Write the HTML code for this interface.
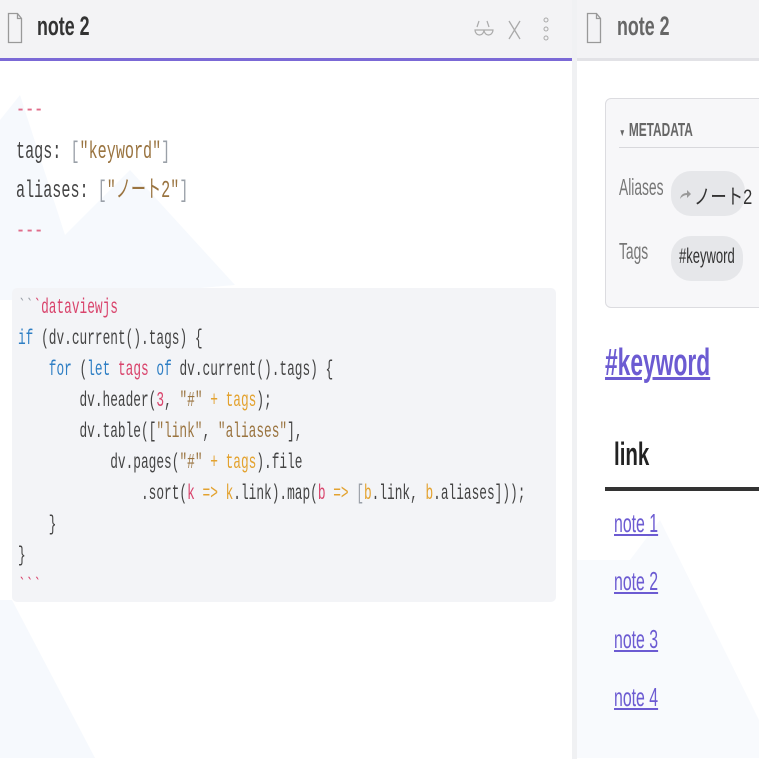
<!DOCTYPE html>
<html><head><meta charset="utf-8"><style>
*{margin:0;padding:0;box-sizing:border-box}
body{width:759px;height:759px;overflow:hidden;background:#fff;position:relative;font-family:"Liberation Sans","Noto Sans CJK JP",sans-serif}
.a{position:absolute;white-space:pre;transform-origin:0 50%}
.m{font-family:"Liberation Mono","Noto Sans CJK JP",monospace}
.pk{color:#d9446c}.bl{color:#2d7ec4}.br{color:#9a7440}.or{color:#e3a22f}.gy{color:#9aa0a8}
</style></head><body>
<svg style="position:absolute;left:0;top:0" width="759" height="759">
<polygon points="0,120 20,95 65,235 130,170 235,285 60,300 0,300" fill="#f6f9fd"/>
<polygon points="0,600 12,600 95,758 0,758" fill="#f6f9fd"/>
<polygon points="577,560 630,560 660,520 759,720 759,758 577,758" fill="#f8fafd"/>
</svg>
<div style="position:absolute;left:0;top:0;width:572px;height:59px;background:#f3f3f5"></div>
<div style="position:absolute;left:0;top:58px;width:572px;height:3px;background:#7b69d6"></div>
<svg style="position:absolute;left:7px;top:12px" width="16" height="32"><path d="M1.5 1.5h9l4 5v24h-13z M10.5 1.5v5h4" fill="none" stroke="#999" stroke-width="1.3"/></svg>
<div class="a" style="left:37px;top:11px;font-size:27px;font-weight:bold;color:#333;transform:scaleX(.66)">note 2</div>
<svg style="position:absolute;left:474px;top:17px" width="80" height="26">
<path d="M3 10l2-6 M15 10l-2-6" stroke="#aaa" fill="none" stroke-width="1.2"/>
<path d="M1 13a4.5 5 0 0 0 9 0zM10 13a4.5 5 0 0 0 9 0zM1 13h18" stroke="#aaa" fill="none" stroke-width="1.2"/>
<path d="M35 4l11 18M46 4l-11 18" stroke="#aaa" stroke-width="1.3"/>
<circle cx="72" cy="3" r="2" fill="none" stroke="#aaa"/><circle cx="72" cy="12" r="2" fill="none" stroke="#aaa"/><circle cx="72" cy="21" r="2" fill="none" stroke="#aaa"/>
</svg>
<div style="position:absolute;left:572px;top:0;width:5px;height:759px;background:#f0f1f3"></div>
<div style="position:absolute;left:577px;top:0;width:182px;height:59px;background:#f3f3f5"></div>
<div style="position:absolute;left:577px;top:58px;width:182px;height:3px;background:#e2e2e6"></div>
<svg style="position:absolute;left:586px;top:12px" width="16" height="32"><path d="M1.5 1.5h9l4 5v24h-13z M10.5 1.5v5h4" fill="none" stroke="#999" stroke-width="1.3"/></svg>
<div class="a" style="left:617px;top:11px;font-size:27px;font-weight:bold;color:#666;transform:scaleX(.66)">note 2</div>
<div class="a m" style="left:16px;top:96px;line-height:30px;font-size:24px;transform:scaleX(.63);color:#e06c8a">---</div>
<div class="a m" style="left:16px;top:138px;line-height:30px;font-size:24px;transform:scaleX(.63);color:#444">tags: <span class="gy">[</span><span class="br">"keyword"</span><span class="gy">]</span></div>
<div class="a m" style="left:16px;top:177px;line-height:30px;font-size:24px;transform:scaleX(.63);color:#444">aliases: <span class="gy">[</span><span class="br">"ノート2"</span><span class="gy">]</span></div>
<div class="a m" style="left:16px;top:217px;line-height:30px;font-size:24px;transform:scaleX(.63);color:#e06c8a">---</div>
<div style="position:absolute;left:12px;top:288px;width:544px;height:314px;background:#f3f4f7;border-radius:5px"></div>
<div class="a m" style="left:18px;top:293px;font-size:21px;line-height:31px;transform:scaleX(.61);transform-origin:0 0;color:#444"><span class="pk"><span class="gy">&#96;&#96;</span>&#96;dataviewjs</span>
<span class="bl">if</span> (dv.current().tags) {
    <span class="bl">for</span> (<span class="bl">let</span> <span class="pk">tags</span> <span class="bl">of</span> dv.current().tags) {
        dv.header(<span class="pk">3</span>, <span class="br">"#"</span> <span class="or">+</span> <span class="or">tags</span>);
        dv.table([<span class="br">"link"</span>, <span class="br">"aliases"</span>],
            dv.pages(<span class="br">"#"</span> <span class="or">+</span> <span class="or">tags</span>).file
                .sort(<span class="pk">k</span> <span class="or">=&gt;</span> <span class="or">k</span>.link).map(<span class="pk">b</span> <span class="or">=&gt;</span> <span class="gy">[</span><span class="or">b</span>.link, <span class="or">b</span>.aliases]));
    }
}
<span class="pk">&#96;&#96;&#96;</span></div>
<div style="position:absolute;left:605px;top:98px;width:170px;height:210px;background:#f7f7f9;border:1px solid #dcdce0;border-radius:6px"></div>
<div class="a" style="left:619px;top:120px;font-size:18px;font-weight:bold;color:#666;transform:scaleX(.66)"><span style="font-size:10px">▼</span> METADATA</div>
<div style="position:absolute;left:619px;top:147px;width:140px;height:1px;background:#d8d8dc"></div>
<div class="a" style="left:619px;top:174px;font-size:23px;color:#777;transform:scaleX(.6)">Aliases</div>
<div style="position:absolute;left:671px;top:171px;width:74px;height:45px;background:#e6e7ea;border-radius:20px"></div>
<svg style="position:absolute;left:679px;top:188px" width="12" height="12"><path d="M1 11q1-6 7-6v-3l4 4-4 4v-3q-4 0-7 4z" fill="#999"/></svg>
<div class="a" style="left:694px;top:181px;font-size:21px;color:#333;transform:scaleX(.78)">ノート2</div>
<div class="a" style="left:619px;top:238px;font-size:23px;color:#777;transform:scaleX(.6)">Tags</div>
<div style="position:absolute;left:671px;top:236px;width:72px;height:45px;background:#e6e7ea;border-radius:20px"></div>
<div class="a" style="left:679px;top:245px;font-size:21px;color:#333;transform:scaleX(.62)">#keyword</div>
<div class="a" style="left:605px;top:342px;font-size:38px;font-weight:bold;color:#6c5bd2;text-decoration:underline;transform:scaleX(.6)">#keyword</div>
<div class="a" style="left:614px;top:436px;font-size:32px;font-weight:bold;color:#222;transform:scaleX(.64)">link</div>
<div style="position:absolute;left:605px;top:487px;width:154px;height:4px;background:#333"></div>
<div class="a" style="left:614px;top:508px;font-size:26px;color:#6c5bd2;text-decoration:underline;transform:scaleX(.61)">note 1</div>
<div class="a" style="left:614px;top:566px;font-size:26px;color:#6c5bd2;text-decoration:underline;transform:scaleX(.61)">note 2</div>
<div class="a" style="left:614px;top:624px;font-size:26px;color:#6c5bd2;text-decoration:underline;transform:scaleX(.61)">note 3</div>
<div class="a" style="left:614px;top:682px;font-size:26px;color:#6c5bd2;text-decoration:underline;transform:scaleX(.61)">note 4</div>
</body></html>
